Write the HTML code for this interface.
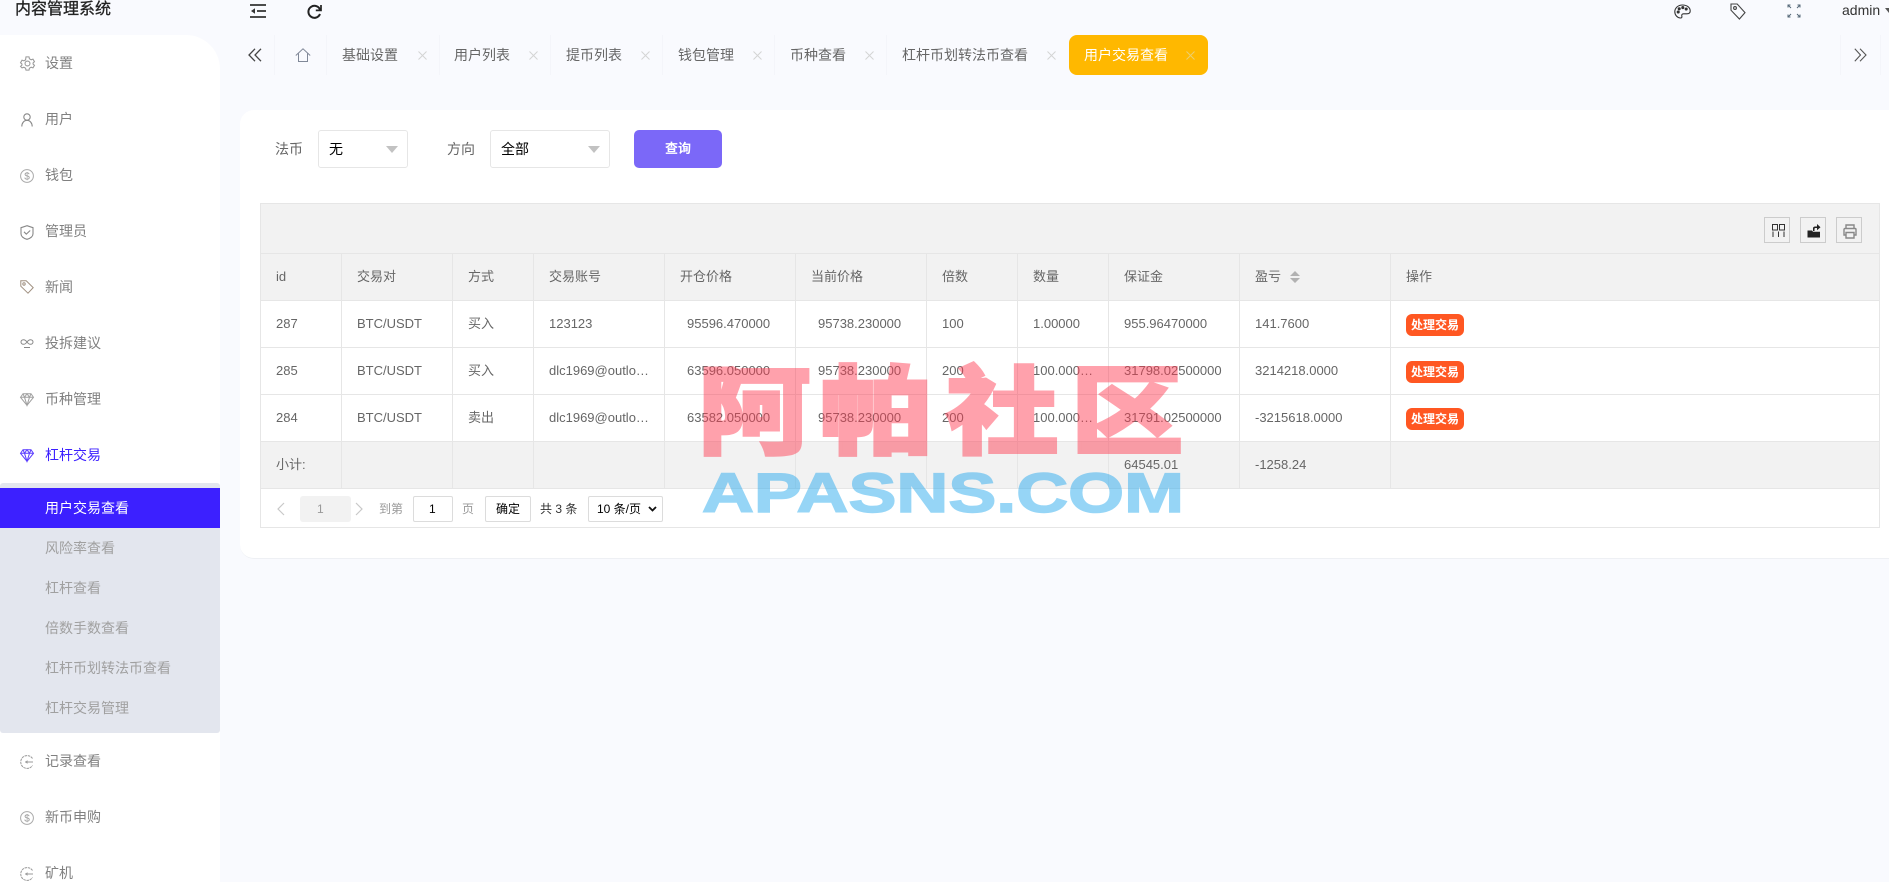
<!DOCTYPE html>
<html lang="zh-CN">
<head>
<meta charset="utf-8">
<title>内容管理系统</title>
<style>
html,body{margin:0;padding:0;width:1889px;height:882px;overflow:hidden;background:#f9fafe;}
body{position:relative;font-family:"Liberation Sans","Noto Sans CJK SC",sans-serif;font-size:14px;color:#666;}
.a{position:absolute;white-space:nowrap;}
.t{position:absolute;white-space:nowrap;line-height:20px;}
svg{position:absolute;display:block;overflow:visible;}
#side{position:absolute;left:0;top:35px;width:220px;height:847px;background:#fff;border-top-right-radius:34px;}
.mi{position:absolute;left:45px;line-height:20px;color:#808080;font-size:14px;white-space:nowrap;}
#sub{position:absolute;left:0;top:483px;width:220px;height:250px;background:#e3e6ee;border-radius:3px;}
.si{position:absolute;left:45px;line-height:20px;color:#a0a0a0;font-size:14px;white-space:nowrap;}
#act{position:absolute;left:0;top:488px;width:220px;height:40px;background:#3c20ff;}
.sep{position:absolute;top:35px;height:40px;width:1px;background:#f4f5fa;}
.tab{position:absolute;top:45px;line-height:20px;color:#666;font-size:14px;white-space:nowrap;}
#card{position:absolute;left:240px;top:110px;width:1700px;height:448px;background:#fff;border-radius:14px;border-bottom:1px solid #eef0f4;}
.sel{position:absolute;top:130px;height:36px;border:1px solid #e6e6e6;border-radius:3px;background:#fff;}
.tri{position:absolute;width:0;height:0;border-left:6.5px solid transparent;border-right:6.5px solid transparent;border-top:7px solid #c2c2c2;}
#tb{position:absolute;left:260px;top:203px;width:1618px;height:49px;background:#f2f2f2;border:1px solid #e6e6e6;}
.ic{position:absolute;top:217px;width:24px;height:24px;border:1px solid #ccc;}
table{position:absolute;left:260px;top:253px;width:1620px;border-collapse:collapse;table-layout:fixed;font-size:13px;color:#666;}
td,th{border:1px solid #e6e6e6;height:46px;padding:0 0 0 15px;font-weight:400;text-align:left;white-space:nowrap;overflow:hidden;box-sizing:border-box;line-height:18px;}
.g td,.g th{background:#f2f2f2;}
td.n{padding-left:22px;}
td.b{padding:0 0 0 15px;}
.bd{display:block;width:58px;height:22px;margin-top:2px;line-height:22px;background:#ff5722;border-radius:6px;color:#fff;font-size:12px;font-weight:700;text-align:center;}
#pg{position:absolute;left:260px;top:489px;width:1618px;height:38px;background:#fff;border:1px solid #e6e6e6;border-top:none;}
.ps{position:absolute;font-size:12px;line-height:20px;white-space:nowrap;}
</style>
</head>
<body>

<!-- Top bar -->
<div class="t" style="left:15px;top:1px;font-size:16px;line-height:18px;color:#222;-webkit-text-stroke:.3px #222;">内容管理系统</div>
<svg style="left:250px;top:4px" width="16" height="14" viewBox="0 0 16 14" fill="none" stroke="#333" stroke-width="1.700"><path d="M0 1h16M7 7h9M0 13h16"/><path d="M5 4.200L1 7l4 2.800z" fill="#333" stroke="none"/></svg>
<svg style="left:307px;top:4px" width="15" height="15" viewBox="0 0 15 15" fill="none" stroke="#222" stroke-width="2"><path d="M13.200 6.200A6 6 0 1 0 13 10"/><path d="M14 1v5.400H8.800" stroke-width="1.700"/></svg>

<svg style="left:1674px;top:4px" width="17" height="15" viewBox="0 0 17 15" fill="none" stroke="#333" stroke-width="1.100"><path d="M8.500 1C4 1 .8 4 .8 7.800c0 3.400 2.700 6.200 5.600 6.200 1.600 0 1.700-1 1.400-2-.3-1.200.4-2.200 1.700-2.200h3.300c2 0 3.400-1 3.400-2.800C16.200 3.400 13 1 8.500 1z"/><circle cx="4.200" cy="8" r="1" fill="#333"/><circle cx="5.200" cy="4.800" r="1" fill="#333"/><circle cx="8.800" cy="3.600" r="1" fill="#333"/><circle cx="12.200" cy="5" r="1" fill="#333"/></svg>
<svg style="left:1730px;top:3px" width="16" height="17" viewBox="0 0 16 17" fill="none" stroke="#444" stroke-width="1.100"><path d="M1 1h6.200l7.800 8.600-5.600 6.400L1 7.200z"/><circle cx="5" cy="5" r="1.400"/></svg>
<svg style="left:1787px;top:4px" width="14" height="14" viewBox="0 0 14 14" fill="none" stroke="#556878" stroke-width="1"><path d="M1 3.500V1h2.500M1 1l3 3M10.500 1H13v2.500M13 1l-3 3M1 10.500V13h2.500M1 13l3-3M10.500 13H13v-2.500M13 13l-3-3"/></svg>
<div class="t" style="left:1842px;top:0;line-height:20px;font-size:14px;color:#333;">admin</div>
<div class="tri" style="left:1885px;top:8px;border-left-width:4px;border-right-width:4px;border-top:5px solid #555;"></div>

<!-- Sidebar -->
<div id="side"></div>
<div id="sub"></div>
<div id="act"></div>

<svg style="left:19.500px;top:55.500px" width="15" height="15" viewBox="0 0 14 14" fill="none" stroke="#999" stroke-width="1"><path d="M5.600.8h2.800l.4 1.800 1.600.9 1.700-.6 1.400 2.400-1.300 1.200v1l1.300 1.200-1.400 2.400-1.700-.6-1.600.9-.4 1.800H5.600l-.4-1.800-1.600-.9-1.700.6L.5 9.700l1.300-1.200v-1L.5 6.300l1.400-2.400 1.700.6 1.600-.9z"/><circle cx="7" cy="7" r="2.300"/></svg>
<div class="mi" style="top:53px">设置</div>
<svg style="left:21px;top:113px" width="12" height="14" viewBox="0 0 12 14" fill="none" stroke="#888" stroke-width="1.100"><circle cx="6" cy="4" r="3.200"/><path d="M.8 13.500c0-3.500 2.200-6.200 5.200-6.200s5.200 2.700 5.200 6.200"/></svg>
<div class="mi" style="top:109px">用户</div>
<svg style="left:20px;top:169px" width="14" height="14" viewBox="0 0 14 14" fill="none" stroke="#aaa" stroke-width="1"><circle cx="7" cy="7" r="6.400"/><text x="7" y="10.500" font-size="10" text-anchor="middle" fill="#999" stroke="none" font-family="Liberation Sans">$</text></svg>
<div class="mi" style="top:165px">钱包</div>
<svg style="left:20px;top:225px" width="14" height="15" viewBox="0 0 14 15" fill="none" stroke="#888" stroke-width="1.100"><path d="M7 .7l6 2v6c0 2.800-3 4.700-6 5.600-3-.9-6-2.800-6-5.600v-6z"/><path d="M4 6.800l2.300 2.300L10.200 5.500"/></svg>
<div class="mi" style="top:221px">管理员</div>
<svg style="left:20px;top:280px" width="14" height="14" viewBox="0 0 14 14" fill="none" stroke="#a09080" stroke-width="1"><path d="M.8.800h5.400l7 6.800-5.200 5.600-7.200-7z"/><circle cx="4" cy="4" r="1.200"/></svg>
<div class="mi" style="top:277px">新闻</div>
<svg style="left:20px;top:338px" width="14" height="11" viewBox="0 0 14 11" fill="none" stroke="#888" stroke-width="1"><path d="M7 4C5.800 2.400 4.800 1.700 3.500 1.700 2 1.700 1 2.800 1 4s1 2.300 2.500 2.300C4.800 6.300 5.800 5.600 7 4c1.200-1.600 2.200-2.300 3.500-2.300C12 1.700 13 2.800 13 4s-1 2.300-2.500 2.300C9.200 6.300 8.200 5.600 7 4z"/><path d="M4 9.500h6"/></svg>
<div class="mi" style="top:333px">投拆建议</div>
<svg style="left:20px;top:393px" width="14" height="13" viewBox="0 0 14 13" fill="none" stroke="#a0a0a0" stroke-width="1"><path d="M3 .7h8l2.500 3.600L7 12.300.5 4.300z"/><path d="M.5 4.300h13M4.500 4.300L7 12.300l2.500-8M3 .7l1.500 3.600L7 .7l2.500 3.600L11 .7"/></svg>
<div class="mi" style="top:389px">币种管理</div>
<svg style="left:20px;top:449px" width="14" height="13" viewBox="0 0 14 13" fill="none" stroke="#5a3cff" stroke-width="1"><path d="M3 .7h8l2.500 3.600L7 12.300.5 4.300z"/><path d="M.5 4.300h13M4.500 4.300L7 12.300l2.500-8M3 .7l1.500 3.600L7 .7l2.500 3.600L11 .7"/></svg>
<div class="mi" style="top:445px;color:#3c20ff">杠杆交易</div>

<div class="si" style="top:498px;color:#fff">用户交易查看</div>
<div class="si" style="top:538px">风险率查看</div>
<div class="si" style="top:578px">杠杆查看</div>
<div class="si" style="top:618px">倍数手数查看</div>
<div class="si" style="top:658px">杠杆币划转法币查看</div>
<div class="si" style="top:698px">杠杆交易管理</div>

<svg style="left:20px;top:755px" width="14" height="14" viewBox="0 0 14 14" fill="none" stroke="#999" stroke-width="1"><path d="M12.500 3.500A6.400 6.400 0 1 0 12.500 10.500" stroke-dasharray="2.500 .7"/><path d="M5 7h8M6 7l1-.8v1.600z"/></svg>
<div class="mi" style="top:751px">记录查看</div>
<svg style="left:20px;top:811px" width="14" height="14" viewBox="0 0 14 14" fill="none" stroke="#aaa" stroke-width="1"><circle cx="7" cy="7" r="6.400"/><text x="7" y="10.500" font-size="10" text-anchor="middle" fill="#999" stroke="none" font-family="Liberation Sans">$</text></svg>
<div class="mi" style="top:807px">新币申购</div>
<svg style="left:20px;top:867px" width="14" height="14" viewBox="0 0 14 14" fill="none" stroke="#999" stroke-width="1"><path d="M12.500 3.500A6.400 6.400 0 1 0 12.500 10.500" stroke-dasharray="2.500 .7"/><path d="M5 7h8M6 7l1-.8v1.600z"/></svg>
<div class="mi" style="top:863px">矿机</div>

<!-- Tabs -->
<div class="sep" style="left:274px"></div>
<div class="sep" style="left:326px"></div>
<div class="sep" style="left:439px"></div>
<div class="sep" style="left:550px"></div>
<div class="sep" style="left:662px"></div>
<div class="sep" style="left:774px"></div>
<div class="sep" style="left:886px"></div>
<div class="sep" style="left:1840px"></div>
<div class="sep" style="left:1880px"></div>
<svg style="left:248px;top:48px" width="14" height="14" viewBox="0 0 14 14" fill="none" stroke="#444" stroke-width="1.300"><path d="M7 .8L1 7l6 6.200M13 .8L7 7l6 6.200"/></svg>
<svg style="left:295px;top:48px" width="16" height="14" viewBox="0 0 16 14" fill="none" stroke="#808898" stroke-width="1"><path d="M.8 7.500L8 .8l7.200 6.700M3.500 5.500v8h9v-8"/></svg>

<div class="tab" style="left:342px">基础设置</div><svg style="left:418px;top:51px" width="9" height="9" viewBox="0 0 9 9" stroke="#d4d4d4"><path d="M.5.5l8 8M8.500.5l-8 8"/></svg>
<div class="tab" style="left:454px">用户列表</div><svg style="left:529px;top:51px" width="9" height="9" viewBox="0 0 9 9" stroke="#d4d4d4"><path d="M.5.5l8 8M8.500.5l-8 8"/></svg>
<div class="tab" style="left:566px">提币列表</div><svg style="left:641px;top:51px" width="9" height="9" viewBox="0 0 9 9" stroke="#d4d4d4"><path d="M.5.5l8 8M8.500.5l-8 8"/></svg>
<div class="tab" style="left:678px">钱包管理</div><svg style="left:753px;top:51px" width="9" height="9" viewBox="0 0 9 9" stroke="#d4d4d4"><path d="M.5.5l8 8M8.500.5l-8 8"/></svg>
<div class="tab" style="left:790px">币种查看</div><svg style="left:865px;top:51px" width="9" height="9" viewBox="0 0 9 9" stroke="#d4d4d4"><path d="M.5.5l8 8M8.500.5l-8 8"/></svg>
<div class="tab" style="left:902px">杠杆币划转法币查看</div><svg style="left:1047px;top:51px" width="9" height="9" viewBox="0 0 9 9" stroke="#d4d4d4"><path d="M.5.5l8 8M8.500.5l-8 8"/></svg>
<div class="a" style="left:1069px;top:35px;width:139px;height:40px;background:#ffb800;border-radius:8px;"></div>
<div class="tab" style="left:1084px;color:#fff">用户交易查看</div><svg style="left:1186px;top:51px" width="9" height="9" viewBox="0 0 9 9" stroke="#eccf70"><path d="M.5.5l8 8M8.500.5l-8 8"/></svg>
<svg style="left:1854px;top:48px" width="13" height="14" viewBox="0 0 13 14" fill="none" stroke="#555" stroke-width="1.100"><path d="M.8.800L6.500 7 .8 13.200M6 .8L12 7l-6 6.200"/></svg>

<!-- Card -->
<div id="card"></div>
<div class="t" style="left:275px;top:139px;font-size:14px;color:#666">法币</div>
<div class="sel" style="left:318px;width:88px"></div>
<div class="t" style="left:329px;top:139px;font-size:14px;color:#000">无</div>
<div class="tri" style="left:386px;top:146px"></div>
<div class="t" style="left:447px;top:139px;font-size:14px;color:#666">方向</div>
<div class="sel" style="left:490px;width:118px"></div>
<div class="t" style="left:501px;top:139px;font-size:14px;color:#000">全部</div>
<div class="tri" style="left:588px;top:146px"></div>
<div class="a" style="left:634px;top:130px;width:88px;height:38px;background:#7b68f8;border-radius:5px;color:#fff;font-size:13px;font-weight:700;text-align:center;line-height:38px;">查询</div>

<!-- Table -->
<div id="tb"></div>
<div class="ic" style="left:1764px"></div>
<svg style="left:1772px;top:224px" width="13" height="13" viewBox="0 0 13 13" fill="none" stroke="#333" stroke-width="1"><path d="M.5.500h5v5.500h-5zM7.500.500h5v5.500h-5zM1 7.500V13M6.500 7.500V13M12 7.500V13"/></svg>
<div class="ic" style="left:1800px"></div>
<svg style="left:1807px;top:223px" width="14" height="15" viewBox="0 0 14 15"><path d="M1 7.500h4l1 1.300h7V14.500H.5V7.500z" fill="#222"/><path d="M6 8V5.500C6 4 7 3.500 8.500 3.500H10V1l3.500 3.200L10 7.200V5H8.500C7.700 5 7.500 5.500 7.500 6v2z" fill="#222"/></svg>
<div class="ic" style="left:1836px"></div>
<svg style="left:1843px;top:223.500px" width="14" height="15" viewBox="0 0 14 15" fill="none" stroke="#888" stroke-width="1.400"><path d="M3 4.500V1h8v3.500M3 11H1V5.500C1 4.900 1.500 4.500 2 4.500h10c.5 0 1 .4 1 1V11h-2M3 8.500h8V14H3z"/></svg>

<table>
<colgroup><col style="width:81px"><col style="width:111px"><col style="width:81px"><col style="width:131px"><col style="width:131px"><col style="width:131px"><col style="width:91px"><col style="width:91px"><col style="width:131px"><col style="width:151px"><col></colgroup>
<tr class="g" style="height:47px"><th>id</th><th>交易对</th><th>方式</th><th>交易账号</th><th>开仓价格</th><th>当前价格</th><th>倍数</th><th>数量</th><th>保证金</th><th>盈亏</th><th>操作</th></tr>
<tr style="height:47px"><td>287</td><td>BTC/USDT</td><td>买入</td><td>123123</td><td class="n">95596.470000</td><td class="n">95738.230000</td><td>100</td><td>1.00000</td><td>955.96470000</td><td>141.7600</td><td class="b"><span class="bd">处理交易</span></td></tr>
<tr style="height:47px"><td>285</td><td>BTC/USDT</td><td>买入</td><td>dlc1969@outlo…</td><td class="n">63596.050000</td><td class="n">95738.230000</td><td>200</td><td>100.000…</td><td>31798.02500000</td><td>3214218.0000</td><td class="b"><span class="bd">处理交易</span></td></tr>
<tr style="height:47px"><td>284</td><td>BTC/USDT</td><td>卖出</td><td>dlc1969@outlo…</td><td class="n">63582.050000</td><td class="n">95738.230000</td><td>200</td><td>100.000…</td><td>31791.02500000</td><td>-3215618.0000</td><td class="b"><span class="bd">处理交易</span></td></tr>
<tr class="g" style="height:47px"><td>小计:</td><td></td><td></td><td></td><td></td><td></td><td></td><td></td><td>64545.01</td><td>-1258.24</td><td></td></tr>
</table>
<svg style="left:1290px;top:271px" width="10" height="12" viewBox="0 0 10 12" fill="#b2b2b2"><path d="M5 0l5 5H0zM0 7h10l-5 5z"/></svg>

<!-- Pagination -->
<div id="pg"></div>
<svg style="left:276px;top:502px" width="9" height="14" viewBox="0 0 9 14" fill="none" stroke="#c8c8c8" stroke-width="1.200"><path d="M8 1L2 7l6 6"/></svg>
<div class="a" style="left:300px;top:496px;width:51px;height:26px;background:#f2f2f2;border-radius:3px;"></div>
<div class="ps" style="left:317px;top:499px;color:#999">1</div>
<svg style="left:355px;top:502px" width="9" height="14" viewBox="0 0 9 14" fill="none" stroke="#c8c8c8" stroke-width="1.200"><path d="M1 1l6 6-6 6"/></svg>
<div class="ps" style="left:379px;top:499px;color:#999">到第</div>
<div class="a" style="left:413px;top:496px;width:38px;height:24px;border:1px solid #dcdcdc;border-radius:2px;background:#fff;"></div>
<div class="ps" style="left:429px;top:499px;color:#000">1</div>
<div class="ps" style="left:462px;top:499px;color:#999">页</div>
<div class="a" style="left:485px;top:496px;width:44px;height:24px;border:1px solid #dcdcdc;border-radius:2px;background:#fff;font-size:12px;line-height:25px;text-align:center;color:#000;">确定</div>
<div class="ps" style="left:540px;top:499px;color:#333">共 3 条</div>
<div class="a" style="left:588px;top:496px;width:73px;height:24px;border:1px solid #dcdcdc;border-radius:2px;background:#fff;"></div>
<div class="ps" style="left:597px;top:499px;color:#000">10 条/页</div>
<svg style="left:648px;top:506px" width="9" height="6" viewBox="0 0 9 6" fill="none" stroke="#111" stroke-width="1.800"><path d="M1 1l3.500 3.500L8 1"/></svg>

<!-- Watermark -->
<svg style="left:0;top:0" width="1889" height="882" viewBox="0 0 1889 882">
<g opacity=".47" font-size="96" font-weight="900" fill="#ff3a50" stroke="#ff3a50" stroke-width="3" font-family="Noto Sans CJK SC, sans-serif">
<text transform="translate(698,446) scale(1.170,1)">阿</text>
<text transform="translate(820,446) scale(1.170,1)">帕</text>
<text transform="translate(946,446) scale(1.170,1)">社</text>
<text transform="translate(1071,446) scale(1.170,1)">区</text>
</g>
<g opacity=".48">
<text x="702" y="512" font-size="56" font-weight="700" fill="#25a9ee" stroke="#25a9ee" stroke-width="1.500" textLength="482" lengthAdjust="spacingAndGlyphs" font-family="Liberation Sans, sans-serif">APASNS.COM</text>
</g>
</svg>

</body>
</html>
